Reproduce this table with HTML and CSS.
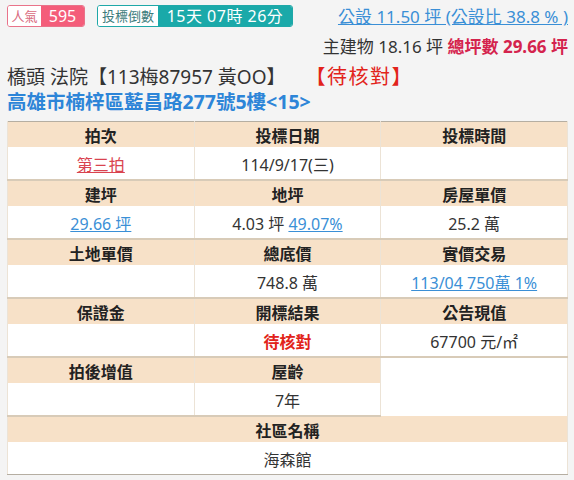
FILE: index.html
```html
<!DOCTYPE html>
<html lang="zh-Hant">
<head>
<meta charset="utf-8">
<link rel="stylesheet" href="styles.css">
</head>
<body>
<div class="page">
  <div class="top">
    <div class="badges">
      <span class="badge pop"><span class="lbl">人氣</span><span class="val">595</span></span>
      <span class="badge cd"><span class="lbl">投標倒數</span><span class="val">15天 07時 26分</span></span>
    </div>
    <a class="pub">公設 11.50 坪 (公設比 38.8 % )</a>
  </div>
  <div class="area"><span>主建物 18.16 坪</span> <span class="total">總坪數 29.66 坪</span></div>
  <div class="title">橋頭 法院【113梅87957 黃OO】<span class="status">【待核對】</span></div>
  <div class="addr">高雄市楠梓區藍昌路277號5樓&lt;15&gt;</div>
  <table class="info">
    <tr class="h"><th>拍次</th><th>投標日期</th><th>投標時間</th></tr>
    <tr class="d"><td><a class="red-link">第三拍</a></td><td>114/9/17(三)</td><td></td></tr>
    <tr class="h"><th>建坪</th><th>地坪</th><th>房屋單價</th></tr>
    <tr class="d"><td><a class="link">29.66 坪</a></td><td>4.03 坪 <a class="link">49.07%</a></td><td>25.2 萬</td></tr>
    <tr class="h"><th>土地單價</th><th>總底價</th><th>實價交易</th></tr>
    <tr class="d"><td></td><td>748.8 萬</td><td><a class="link">113/04 750萬 1%</a></td></tr>
    <tr class="h"><th>保證金</th><th>開標結果</th><th>公告現值</th></tr>
    <tr class="d"><td></td><td class="pending">待核對</td><td>67700 元/㎡</td></tr>
    <tr class="h"><th>拍後增值</th><th>屋齡</th><td class="blank" rowspan="2"></td></tr>
    <tr class="d"><td></td><td>7年</td></tr>
    <tr class="h"><th colspan="3">社區名稱</th></tr>
    <tr class="d last"><td colspan="3">海森館</td></tr>
  </table>
</div>
</body>
</html>
```
FILE: styles.css
```css
html, body {
  margin: 0;
  padding: 0;
  background: #f4f4f4;
}
body {
  font-family: "Noto Sans", "Noto Sans CJK TC", sans-serif;
  color: #333;
}
.page {
  padding: 5px 6px 0 7px;
}
.top {
  display: flex;
  justify-content: space-between;
  align-items: flex-start;
  height: 31px;
}
.badges {
  display: flex;
  gap: 12px;
}
.badge {
  display: inline-flex;
  height: 22px;
  box-sizing: border-box;
  border-radius: 3px;
  overflow: hidden;
  font-size: 13px;
  line-height: 20px;
  white-space: nowrap;
}
.badge .lbl {
  background: #fff;
  text-align: center;
}
.badge .val {
  color: #fff;
}
.pop {
  border: 1px solid #e9738a;
  width: 78px;
}
.pop .lbl { color: #d96b80; width: 33px; }
.pop .val {
  background: #f45d7a;
  flex: 1;
  text-align: center;
  font-size: 16px;
}
.cd {
  border: 1px solid #1fa8a8;
  width: 196px;
}
.cd .lbl { color: #3c7c7c; width: 60px; }
.cd .val {
  background: #1aa9a9;
  flex: 1;
  text-align: center;
  font-size: 16px;
  letter-spacing: 0.5px;
}
.pub {
  color: #3a8fd6;
  text-decoration: underline;
  font-size: 17px;
  line-height: 22px;
  margin-top: 1px;
  white-space: nowrap;
}
.area {
  text-align: right;
  font-size: 17px;
  line-height: 22px;
  color: #333;
}
.area .total {
  color: #d4234d;
  font-weight: bold;
}
.title {
  font-size: 19px;
  line-height: 26px;
  margin-top: 6px;
  color: #333;
  white-space: nowrap;
}
.title .status {
  color: #e2231a;
  margin-left: 30px;
  font-size: 20px;
  letter-spacing: 1.5px;
}
.addr {
  font-size: 19.5px;
  line-height: 24px;
  font-weight: bold;
  color: #2d85d8;
  white-space: nowrap;
}
.info {
  margin-top: 7px;
  width: 561px;
  border-collapse: collapse;
  border: 1px solid #b5aea2;
  table-layout: fixed;
  font-size: 16px;
  text-align: center;
  background: #fff;
}
.info th, .info td {
  border-left: 1px solid #ece3d6;
  border-right: 1px solid #ece3d6;
  padding: 0;
}
.info tr.h th, .info tr.h td {
  height: 25px;
  font-weight: bold;
  color: #222;
}
.info tr.h th {
  background: #f7e1c8;
}
.info tr.h td.blank {
  background: #fff;
}
.info tr.d td {
  height: 30px;
  padding-top: 2px;
  border-bottom: 2px solid #d8cbb8;
}
.info tr.d.last td {
  border-bottom: 1px solid #b5aea2;
}
.link {
  color: #3a8fd6;
  text-decoration: underline;
}
.red-link {
  color: #d9434f;
  text-decoration: underline;
}
.pending {
  color: #e2231a;
  font-weight: bold;
}
```
